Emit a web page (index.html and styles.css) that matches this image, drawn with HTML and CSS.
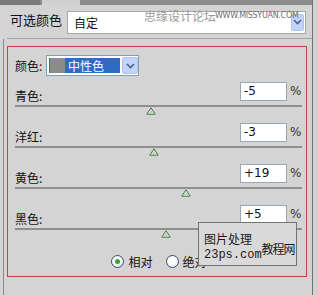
FILE: index.html
```html
<!DOCTYPE html>
<html lang="zh">
<head>
    <meta charset="UTF-8">
    <meta name="viewport" content="width=device-width, initial-scale=1.0">
    <title>可选颜色</title>
    <link rel="stylesheet" href="styles.css">
</head>
<body>
    <div class="panel">
        <div class="tabs">
            <div class="tab"></div>
            <div class="tab tab-active"></div>
        </div>
        <div class="head">
            <span class="head-label">可选颜色</span>
            <div class="preset">
                <span class="preset-text">自定</span>
                <span class="combo-btn preset-btn">
                    <svg width="9" height="6" viewBox="0 0 9 6"><path d="M1 1 L4.5 4.5 L8 1" fill="none" stroke="#4d6185" stroke-width="1.6"/></svg>
                </span>
            </div>
        </div>
        <div class="sep"></div>
        <div class="group">
            <div class="redbox">
                <div class="color-row">
                    <span class="label color-label">颜色:</span>
                    <div class="select">
                        <span class="select-value"><span class="swatch"></span>中性色</span>
                        <span class="combo-btn">
                            <svg width="9" height="6" viewBox="0 0 9 6"><path d="M1 1 L4.5 4.5 L8 1" fill="none" stroke="#4d6185" stroke-width="1.6"/></svg>
                        </span>
                    </div>
                </div>

                <div class="slider">
                    <div class="slider-head">
                        <span class="label">青色:</span>
                        <span class="num">-5</span>
                        <span class="pct">%</span>
                    </div>
                    <div class="track"><span class="thumb" style="left: 47.5%"><svg width="10" height="8" viewBox="0 0 10 8"><path d="M5 0.8 L9.2 7.2 L0.8 7.2 Z" fill="#dcefdc" stroke="#4f6f4f" stroke-width="1"/><path d="M5 3 L7.3 6.3 L2.7 6.3 Z" fill="#b4d8b4"/></svg></span></div>
                </div>

                <div class="slider">
                    <div class="slider-head">
                        <span class="label">洋红:</span>
                        <span class="num">-3</span>
                        <span class="pct">%</span>
                    </div>
                    <div class="track"><span class="thumb" style="left: 48.5%"><svg width="10" height="8" viewBox="0 0 10 8"><path d="M5 0.8 L9.2 7.2 L0.8 7.2 Z" fill="#dcefdc" stroke="#4f6f4f" stroke-width="1"/><path d="M5 3 L7.3 6.3 L2.7 6.3 Z" fill="#b4d8b4"/></svg></span></div>
                </div>

                <div class="slider">
                    <div class="slider-head">
                        <span class="label">黄色:</span>
                        <span class="num">+19</span>
                        <span class="pct">%</span>
                    </div>
                    <div class="track"><span class="thumb" style="left: 59.5%"><svg width="10" height="8" viewBox="0 0 10 8"><path d="M5 0.8 L9.2 7.2 L0.8 7.2 Z" fill="#dcefdc" stroke="#4f6f4f" stroke-width="1"/><path d="M5 3 L7.3 6.3 L2.7 6.3 Z" fill="#b4d8b4"/></svg></span></div>
                </div>

                <div class="slider">
                    <div class="slider-head">
                        <span class="label">黑色:</span>
                        <span class="num">+5</span>
                        <span class="pct">%</span>
                    </div>
                    <div class="track"><span class="thumb" style="left: 52.5%"><svg width="10" height="8" viewBox="0 0 10 8"><path d="M5 0.8 L9.2 7.2 L0.8 7.2 Z" fill="#dcefdc" stroke="#4f6f4f" stroke-width="1"/><path d="M5 3 L7.3 6.3 L2.7 6.3 Z" fill="#b4d8b4"/></svg></span></div>
                </div>

                <div class="radios">
                    <label class="radio"><span class="radio-dot radio-on"></span>相对</label>
                    <label class="radio"><span class="radio-dot"></span>绝对</label>
                </div>
            </div>
        </div>

        <!-- watermarks stamped over the screenshot -->
        <div class="mark-top">思缘设计论坛</div>
        <div class="mark-url">WWW.MISSYUAN.COM</div>
        <div class="mark-box">
            <div class="mark-left">
                <div>图片处理</div>
                <div class="mark-site">23ps.com</div>
            </div>
            <div class="mark-right">教程网</div>
        </div>
    </div>
</body>
</html>
```

FILE: styles.css
```css
body {
    margin: 0;
    padding: 0;
    width: 317px;
    height: 295px;
    overflow: hidden;
    background: #d2d2d2;
    font-family: "Noto Sans CJK SC", "DejaVu Sans", sans-serif;
    font-size: 12px;
    color: #111;
}
.panel {
    position: relative;
    width: 312px;
    height: 295px;
    background: #d4d4d4;
    border-right: 1px solid #6f6f6f;
}
.tabs {
    display: flex;
    height: 5px;
    background: #8c8c8c;
}
.tab {
    width: 40px;
    height: 5px;
    background: #7a7a7a;
    margin-right: 2px;
}
.tab-active {
    width: 38px;
    background: #d0d0d0;
}
.head {
    display: flex;
    align-items: center;
    height: 33px;
    padding-left: 10px;
}
.head-label {
    width: 57px;
    font-size: 13px;
    line-height: 14px;
    margin-top: -3px;
}
.preset {
    box-sizing: border-box;
    width: 239px;
    height: 23px;
    background: white;
    border: 1px solid #a3a9b1;
    display: flex;
    align-items: center;
    padding: 0 0 0 6px;
    margin-top: 1px;
}
.preset-text {
    flex: 1;
    font-size: 12px;
    line-height: 14px;
    margin-top: 2px;
}
.combo-btn {
    box-sizing: border-box;
    width: 16px;
    height: 17px;
    background: #c3d3fb;
    border: 1px solid #b0c4ef;
    border-radius: 2px;
    display: flex;
    align-items: center;
    justify-content: center;
}
.preset-btn {
    width: 13px;
    margin-right: 1px;
}
.sep {
    height: 1px;
    margin-left: 7px;
    background: #a4a4a4;
}
.group {
    margin-left: 3px;
    border-left: 1px solid #8a8a8a;
    padding: 7px 0 0 3px;
    height: 256px;
}
.redbox {
    box-sizing: border-box;
    width: 300px;
    height: 231px;
    border: 1px solid #c7413d;
    padding: 0 4px 0 7px;
}
.label {
    font-size: 12px;
    line-height: 13px;
}
.color-row {
    display: flex;
    align-items: center;
    margin-top: 8px;
    height: 21px;
}
.color-label {
    width: 31px;
}
.select {
    box-sizing: border-box;
    width: 93px;
    height: 21px;
    background: white;
    border: 1px solid #7f9db9;
    display: flex;
    align-items: center;
    padding: 0 0 0 2px;
}
.select-value {
    display: flex;
    align-items: center;
    width: 71px;
    height: 15px;
    background: #316ac5;
    color: white;
    font-size: 12px;
    line-height: 15px;
    margin-right: 2px;
}
.swatch {
    width: 15px;
    height: 15px;
    margin-left: 1px;
    margin-right: 3px;
    background: #8c8c8c;
}
.slider {
    height: 41px;
}
.color-row + .slider {
    margin-top: 6px;
}
.slider-head {
    display: flex;
    align-items: flex-end;
    height: 19px;
}
.slider-head .label {
    flex: 1;
    margin-bottom: -1px;
}
.num {
    box-sizing: border-box;
    width: 47px;
    height: 19px;
    background: white;
    border: 1px solid #9ba6b3;
    padding-left: 3px;
    font-family: "DejaVu Sans", sans-serif;
    font-size: 12px;
    line-height: 17px;
}
.pct {
    width: 11px;
    margin-left: 3px;
    margin-right: 1px;
    font-family: "DejaVu Sans", sans-serif;
    font-size: 12px;
    line-height: 19px;
    color: #333;
    align-self: center;
}
.track {
    position: relative;
    height: 2px;
    margin-top: 4px;
    background: #8f8f8f;
}
.thumb {
    position: absolute;
    top: 2px;
    width: 10px;
    height: 8px;
    transform: translateX(-50%);
}
.thumb svg {
    display: block;
}
.radios {
    display: flex;
    justify-content: center;
    gap: 13px;
    margin-top: 9px;
    padding-left: 1px;
}
.radio {
    display: flex;
    align-items: center;
    font-size: 12px;
    line-height: 13px;
}
.radio-dot {
    box-sizing: border-box;
    width: 13px;
    height: 13px;
    border: 1px solid #3a4d6e;
    border-radius: 50%;
    background: radial-gradient(circle at 40% 35%, #ffffff 30%, #d8dde6 100%);
    margin-right: 4px;
    display: flex;
    align-items: center;
    justify-content: center;
}
.radio-on::after {
    content: "";
    width: 5px;
    height: 5px;
    border-radius: 50%;
    background: #2fa52f;
}
.mark-top {
    position: absolute;
    left: 144px;
    top: 9px;
    font-size: 12px;
    line-height: 14px;
    color: #9a9a9a;
    white-space: nowrap;
}
.mark-url {
    position: absolute;
    left: 215px;
    top: 11px;
    font-family: "DejaVu Sans", sans-serif;
    font-size: 8px;
    line-height: 10px;
    letter-spacing: -0.3px;
    color: #6f6f6f;
    white-space: nowrap;
}
.mark-box {
    position: absolute;
    left: 198px;
    top: 222px;
    box-sizing: border-box;
    width: 99px;
    height: 44px;
    background: #d9d9d9;
    border: 1px solid #747474;
    display: flex;
    padding: 9px 0 0 5px;
    color: #1a1a1a;
}
.mark-left {
    font-size: 12px;
    line-height: 14px;
}
.mark-site {
    font-family: "Liberation Mono", monospace;
    font-size: 12px;
    line-height: 14px;
    margin-top: 2px;
}
.mark-right {
    margin-left: 0;
    margin-top: 10px;
    font-size: 12px;
    line-height: 14px;
    letter-spacing: -1px;
}
```
